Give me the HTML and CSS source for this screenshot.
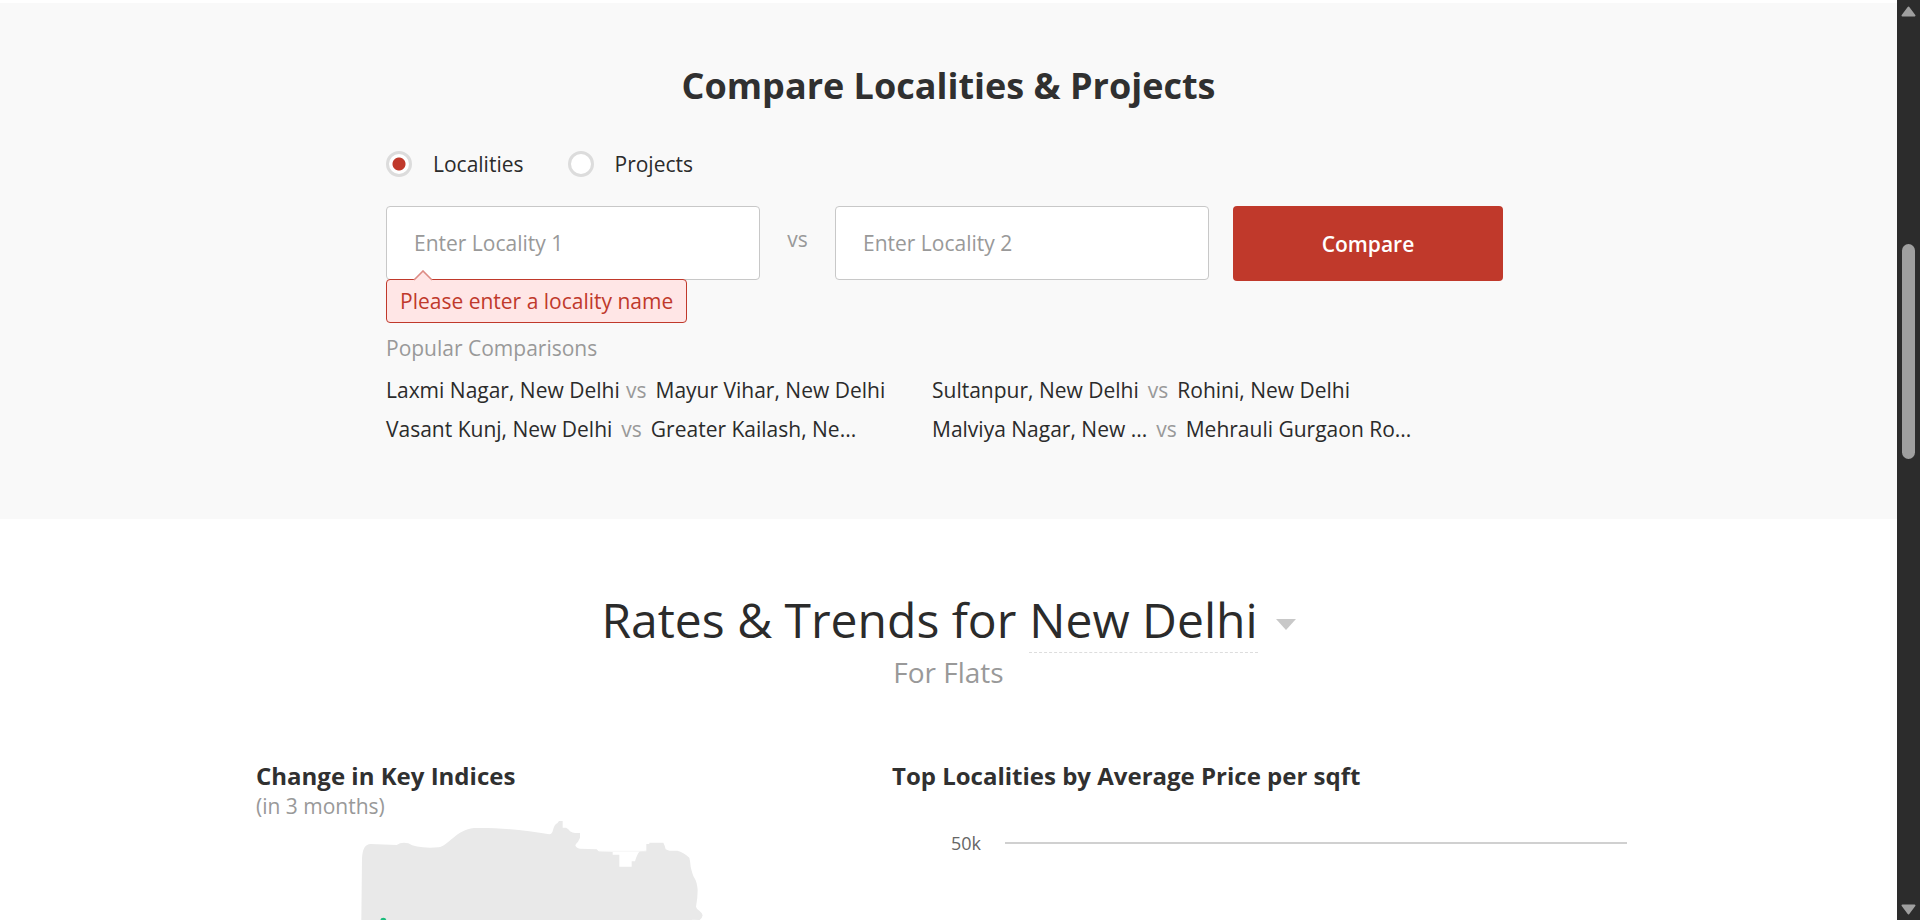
FILE: index.html
```html
<!DOCTYPE html>
<html lang="en">
<head>
<meta charset="utf-8">
<title>Compare Localities &amp; Projects</title>
<link rel="stylesheet" href="styles.css">
</head>
<body>
<main class="page">
  <section class="compare">
    <h2 class="compare-title">Compare Localities &amp; Projects</h2>
    <form class="compare-form">
      <div class="type-options">
        <label class="type-option"><input class="radio" type="radio" name="type" checked>Localities</label>
        <label class="type-option"><input class="radio" type="radio" name="type">Projects</label>
      </div>
      <div class="fields">
        <div class="field">
          <input class="text-input" type="text" placeholder="Enter Locality 1" aria-label="Locality 1" aria-describedby="error-1">
          <div class="error" id="error-1" role="alert">
            <svg class="error-arrow" viewBox="0 0 20 11" aria-hidden="true"><path d="M1 10 10 1l9 9v1H1z" fill="#ffe6e6"/><path d="M1 10 10 1l9 9" fill="none" stroke="#dd8c85" stroke-width="1.6"/></svg>
            Please enter a locality name
          </div>
        </div>
        <span class="fields-vs">vs</span>
        <div class="field">
          <input class="text-input" type="text" placeholder="Enter Locality 2" aria-label="Locality 2">
        </div>
        <button class="compare-button" type="button">Compare</button>
      </div>
    </form>
    <div class="popular">
      <h3 class="popular-title">Popular Comparisons</h3>
      <ul class="popular-list">
        <li><a class="pair" href="#"><span class="pair-first">Laxmi Nagar, New Delhi</span><span class="pair-vs">vs</span><span>Mayur Vihar, New Delhi</span></a></li>
        <li><a class="pair" href="#"><span class="pair-first">Sultanpur, New Delhi</span><span class="pair-vs">vs</span><span>Rohini, New Delhi</span></a></li>
        <li><a class="pair" href="#"><span class="pair-first">Vasant Kunj, New Delhi</span><span class="pair-vs">vs</span><span>Greater Kailash, Ne...</span></a></li>
        <li><a class="pair" href="#"><span class="pair-first">Malviya Nagar, New ...</span><span class="pair-vs">vs</span><span>Mehrauli Gurgaon Ro...</span></a></li>
      </ul>
    </div>
  </section>

  <section class="rates">
    <h2 class="rates-title">Rates &amp; Trends for <button class="city" type="button"><span class="city-name">New Delhi</span><svg class="city-arrow" viewBox="0 0 20 11" aria-hidden="true"><path d="M0 0h20L10 11z" fill="#c8c8c8"/></svg></button></h2>
    <p class="rates-subtitle">For Flats</p>
    <div class="rates-columns">
      <div class="indices">
        <h3 class="column-title">Change in Key Indices</h3>
        <p class="column-note">(in 3 months)</p>
        <svg class="map" viewBox="0 30 1080 300" role="img" aria-label="Map of New Delhi">
          <path fill="#e9e9e9" d="M34 330 36 145Q38 102 62 102L140 105Q155 94 175 100Q195 113 240 113L265 112C295 108 320 58 372 54C440 52 530 61 598 73Q606 73 609 60Q613 43 622 40L627 33H638V53H648Q656 57 660 64Q668 69 675 69H690V83L684 95Q677 101 676 106Q678 115 690 116L740 118 746 124 788 126V134H808V170H845V154H855Q861 133 869 124L889 122V102H898V98H940Q944 105 947 118Q952 121 958 122H982Q1000 126 1018 143Q1021 155 1022 170Q1027 192 1032 202Q1041 215 1043 240Q1043 265 1038 290Q1040 298 1048 302Q1056 308 1058 316Q1057 324 1049 330L1028 329 1024 330Z"/>
          <path d="M746 124H889" stroke="#f1f1f1" stroke-width="2"/>
          <circle cx="100" cy="332" r="9" fill="#1abc7b"/>
        </svg>
      </div>
      <div class="prices">
        <h3 class="column-title">Top Localities by Average Price per sqft</h3>
        <div class="chart-row"><span class="chart-label">50k</span><span class="chart-line"></span></div>
      </div>
    </div>
  </section>
</main>
<div class="scrollbar" aria-hidden="true">
  <svg class="scroll-arrow" viewBox="0 0 15 11"><path d="M7.5 1.500 13.500 9.500H1.500z" fill="#9f9f9f" stroke="#9f9f9f" stroke-width="2" stroke-linejoin="round"/></svg>
  <div class="scroll-track"><div class="scroll-thumb"></div></div>
  <svg class="scroll-arrow" viewBox="0 0 15 11"><path d="M7.5 9.500 13.500 1.500H1.500z" fill="#9f9f9f" stroke="#9f9f9f" stroke-width="2" stroke-linejoin="round"/></svg>
</div>
</body>
</html>
```
FILE: styles.css
```css
* {
  box-sizing: border-box;
}

body {
  margin: 0;
  display: flex;
  height: 100vh;
  overflow: hidden;
  background: #fff;
  color: #2b2b2b;
  font: 21px/30px "Open Sans", "Noto Sans", sans-serif;
}

h2, h3, p, ul {
  margin: 0;
  padding: 0;
}

.page {
  flex: 1;
  min-width: 0;
  overflow: hidden;
  padding-top: 3px;
}

.compare {
  background: #f9f9f9;
  padding: 59px 24px 70px;
}

.compare-title {
  font-size: 36px;
  line-height: 48px;
  font-weight: 700;
  color: #303030;
  text-align: center;
}

.compare-form,
.popular {
  max-width: 1125px;
  margin: 0 auto;
}

.type-options {
  display: flex;
  gap: 44px;
  padding: 39px 0 27px;
}

.type-option {
  display: flex;
  align-items: center;
  gap: 21px;
}

.radio {
  appearance: none;
  width: 26px;
  height: 26px;
  margin: 0;
  border: 3px solid #dcdcdc;
  border-radius: 50%;
  background: #fff;
}

.radio:checked {
  background: radial-gradient(circle, #c0392b 6px, #fff 7px);
}

.fields {
  display: flex;
  align-items: flex-start;
}

.field {
  position: relative;
  flex: 0 1 374px;
}

.text-input {
  display: block;
  width: 100%;
  height: 74px;
  padding: 0 27px;
  border: 1px solid #c8c8c8;
  border-radius: 4px;
  background: #fff;
  font: inherit;
  color: #2b2b2b;
}

.text-input::placeholder {
  color: #999;
  opacity: 1;
}

.fields-vs {
  flex: 0 0 75px;
  padding-top: 18px;
  text-align: center;
  color: #999;
}

.error {
  position: absolute;
  top: 73px;
  left: 0;
  padding: 6px 13px;
  border: 1px solid #c0392b;
  border-radius: 4px;
  background: #ffe6e6;
  color: #c0392b;
  white-space: nowrap;
}

.error-arrow {
  position: absolute;
  top: -10px;
  left: 26px;
  width: 20px;
  height: 11px;
}

.compare-button {
  flex: 0 1 270px;
  height: 75px;
  margin-left: 24px;
  border: 0;
  border-radius: 4px;
  background: #c0392b;
  color: #fff;
  font: inherit;
  font-weight: 600;
}

.popular {
  padding-top: 52px;
}

.popular-title {
  font-size: 21px;
  font-weight: 400;
  color: #999;
}

.popular-list {
  display: grid;
  grid-template-columns: 546px 1fr;
  padding-top: 8px;
  list-style: none;
  line-height: 39px;
}

.pair {
  display: inline-flex;
  gap: 9px;
  color: #2b2b2b;
  text-decoration: none;
  white-space: nowrap;
}

.pair-first {
  max-width: 231px;
}

.pair-vs {
  color: #999;
}

.rates {
  max-width: 1385px;
  margin: 0 auto;
  padding-top: 69px;
}

.rates-title {
  display: flex;
  justify-content: center;
  gap: 13px;
  font-size: 48px;
  line-height: 64px;
  font-weight: 400;
}

.city {
  display: flex;
  align-items: center;
  gap: 18px;
  padding: 0;
  border: 0;
  background: none;
  font: inherit;
  color: inherit;
}

.city-name {
  border-bottom: 1px dashed #ddd;
}

.city-arrow {
  width: 20px;
  height: 11px;
  margin-top: 8px;
}

.rates-subtitle {
  font-size: 28px;
  line-height: 38px;
  text-align: center;
  color: #999;
}

.rates-columns {
  display: grid;
  grid-template-columns: 636px 1fr;
  padding-top: 69px;
}

.column-title {
  font-size: 24px;
  line-height: 32px;
  font-weight: 700;
  color: #303030;
}

.column-note {
  line-height: 28px;
  color: #999;
}

.map {
  display: block;
  width: 360px;
  height: 100px;
  margin-left: 94px;
}

.chart-row {
  display: flex;
  align-items: center;
  gap: 24px;
  padding: 36px 14px 0 59px;
}

.chart-label {
  font-size: 18px;
  color: #666;
}

.chart-line {
  flex: 1;
  height: 2px;
  background: #d0d0d0;
}

.scrollbar {
  flex: 0 0 23px;
  display: flex;
  flex-direction: column;
  align-items: center;
  padding: 6px 0 5px;
  background: #2c2c2c;
}

.scroll-arrow {
  width: 15px;
  height: 11px;
}

.scroll-track {
  flex: 1;
  padding-top: 227px;
}

.scroll-thumb {
  width: 13px;
  height: 215px;
  border-radius: 7px;
  background: #9f9f9f;
}
```
